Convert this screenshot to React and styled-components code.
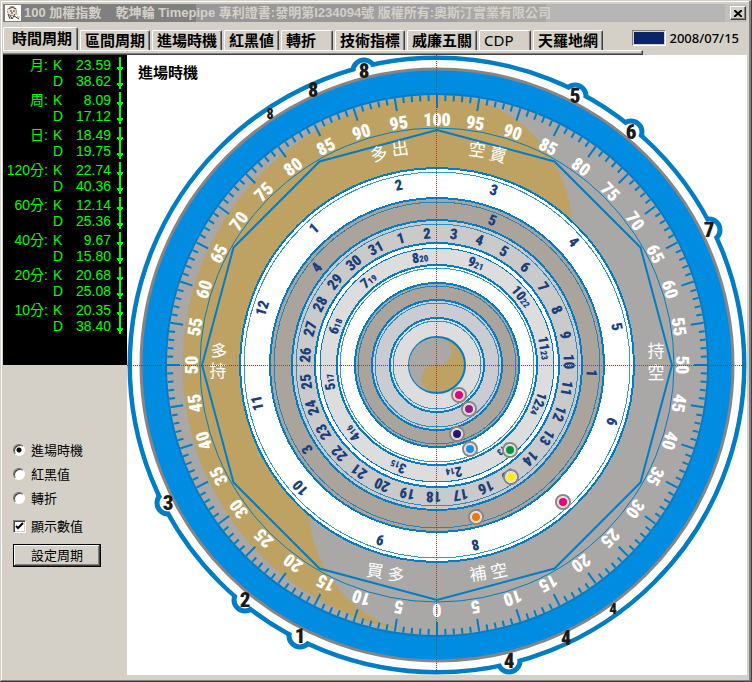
import { useState } from 'react';
import styled, { createGlobalStyle } from 'styled-components';

const latin = '"Noto Sans", "Noto Sans CJK TC", sans-serif';
const narrow = 'Impact, "Roboto Condensed", "Liberation Sans Narrow", "Noto Sans CJK TC", sans-serif';

const GlobalStyle = createGlobalStyle`
  * {
    box-sizing: border-box;
  }

  body {
    margin: 0;
    background: #d4d0c8;
    color: #000000;
    font-family: ${latin};
    font-size: 13px;
  }
`;

const Window = styled.div`
  min-height: 100vh;
  padding: 4px 5px 7px 3px;
  background: #d4d0c8;
  box-shadow: inset -1px -1px #404040, inset 1px 1px #d4d0c8,
    inset -3px -2px #808080, inset 2px 2px #ffffff;
`;

const TitleBar = styled.header`
  display: flex;
  align-items: center;
  gap: 3px;
  height: 18px;
  padding: 0 1px 0 2px;
  background: linear-gradient(
    to right,
    #808080 26%, #989898 26% 49%, #a0a0a4 49% 61%,
    #a8a8a4 61% 73%, #b6b6b6 73% 97%, #c0c0c0 97%
  );
`;

const TitleText = styled.h1`
  flex: 1;
  margin: 0;
  overflow: hidden;
  font: bold 13px/18px "Liberation Sans", "Noto Sans CJK TC", sans-serif;
  white-space: pre;
  color: #d4d0c8;
`;

const CloseButton = styled.button`
  display: flex;
  align-items: center;
  justify-content: center;
  width: 16px;
  height: 14px;
  padding: 0;
  background: #d4d0c8;
  border: 1px solid;
  border-color: #ffffff #404040 #404040 #ffffff;
  box-shadow: inset -1px -1px #808080;
`;

const TopBar = styled.div`
  display: flex;
  justify-content: space-between;
  height: 28px;
`;

const Tabs = styled.nav`
  display: flex;
  align-items: flex-end;
  gap: 2px;
`;

const Tab = styled.button`
  min-width: 52px;
  height: ${({ $active }) => ($active ? '23px' : '20px')};
  padding: ${({ $active }) => ($active ? '0 5px 2px 8px' : '0 4px 1px')};
  background: #d4d0c8;
  border: 1px solid;
  border-color: #ffffff #404040 transparent #ffffff;
  border-bottom: 0;
  border-radius: 2px 2px 0 0;
  box-shadow: inset -1px 0 #808080;
  font: ${({ $plain }) => ($plain ? 'normal' : 'bold')} 15px/18px ${latin};
  text-align: left;
  white-space: nowrap;
`;

const DateBox = styled.div`
  display: flex;
  align-items: center;
  gap: 4px;
  margin-right: 8px;
  padding-top: 3px;
  font-size: 13px;
  font-weight: 500;
  line-height: 18px;
`;

const Swatch = styled.button`
  width: 34px;
  height: 16px;
  padding: 0;
  background: #0a246a;
  border: 1px solid;
  border-color: #808080 #ffffff #ffffff #808080;
  box-shadow: inset 0 0 0 1px #d4d0c8;
`;

const TabEdge = styled.div`
  height: 5px;
  margin-right: 104px;
  border-top: 1px solid #ffffff;
  border-right: 1px solid #404040;
  border-bottom: 1px solid #404040;
  box-shadow: inset -1px -1px #808080;
`;

const Body = styled.div`
  display: grid;
  grid-template-columns: 124px 1fr;
`;

const Sidebar = styled.aside`
  display: flex;
  flex-direction: column;
`;

const Board = styled.div`
  height: 310px;
  padding-top: 2px;
  background: #000000;
`;

const Readings = styled.table`
  width: 100%;
  border-collapse: collapse;
  table-layout: fixed;
  color: #00ff00;
  font: 14px/16px "Liberation Sans", "Noto Sans CJK TC", sans-serif;
  white-space: nowrap;
`;

const Period = styled.th`
  width: 45px;
  height: 16px;
  padding: 0;
  font-weight: 400;
  text-align: right;
`;

const Line = styled.td`
  width: 17px;
  padding: 0 0 0 5px;
`;

const Value = styled.td`
  padding: 0;
  text-align: right;
`;

const Trend = styled.td`
  width: 16px;
  padding: 0 4px 0 0;
  line-height: 0;
  text-align: right;
`;

const GroupGap = styled.tr`
  height: 3px;
`;

const Options = styled.form`
  display: flex;
  flex-direction: column;
  align-items: flex-start;
  gap: 8px;
  padding: 75px 0 0 10px;
`;

const Modes = styled.fieldset`
  display: flex;
  flex-direction: column;
  gap: 4px;
  margin: 0;
  padding: 0;
  border: 0;
`;

const Option = styled.label`
  display: flex;
  align-items: center;
  gap: 5px;
  height: 20px;
  font-size: 13px;
  line-height: 20px;
`;

const Radio = styled.input`
  appearance: none;
  width: 12px;
  height: 12px;
  margin: 0 1px 0 0;
  border: 1px solid;
  border-color: #707070 #ffffff #ffffff #707070;
  border-radius: 50%;
  background: #ffffff;
  box-shadow: inset 1px 1px #404040;

  &:checked {
    background: radial-gradient(circle, #000000 2px, #ffffff 3px);
  }
`;

const CheckMark = styled.span`
  display: grid;
  width: 13px;
  height: 13px;

  & > * {
    grid-area: 1 / 1;
  }

  input:not(:checked) + svg {
    visibility: hidden;
  }
`;

const CheckInput = styled.input`
  appearance: none;
  width: 13px;
  height: 13px;
  margin: 0;
  border: 1px solid;
  border-color: #808080 #ffffff #ffffff #808080;
  background: #ffffff;
  box-shadow: inset 1px 1px #404040, inset -1px -1px #d4d0c8;
`;

const PushButton = styled.button`
  width: 88px;
  height: 23px;
  padding: 0 0 2px;
  background: #d4d0c8;
  border: 1px solid #000000;
  box-shadow: inset -1px -1px #404040, inset 1px 1px #ffffff,
    inset -2px -2px #808080;
  font: 13px/18px ${latin};
`;

const Canvas = styled.main`
  position: relative;
  background: #ffffff;
`;

const CanvasTitle = styled.h2`
  position: absolute;
  top: 7px;
  left: 11px;
  margin: 0;
  font-size: 15px;
  font-weight: 700;
  line-height: 20px;
`;

const Dial = styled.svg`
  display: block;
  width: 100%;
  height: auto;
`;

const DialText = styled.text`
  font-family: ${narrow};
  font-size: ${({ $size }) => $size}px;
  font-weight: ${({ $light }) => ($light ? 400 : 900)};
  fill: ${({ $color }) => $color};
  text-anchor: middle;
`;

const SmallText = styled.tspan`
  font-size: 9px;
`;

const blue = '#007dc5';
const navy = '#17407c';
const tan = '#bda263';
const grey = '#a9a8a6';

const tabs = [
  '時間周期', '區間周期', '進場時機', '紅黑値', '轉折',
  '技術指標', '威廉五關', 'CDP', '天羅地網',
];

const readings = [
  { period: '月', k: '23.59', d: '38.62' },
  { period: '周', k: '8.09', d: '17.12' },
  { period: '日', k: '18.49', d: '19.75' },
  { period: '120分', k: '22.74', d: '40.36' },
  { period: '60分', k: '12.14', d: '25.36' },
  { period: '40分', k: '9.67', d: '15.80' },
  { period: '20分', k: '20.68', d: '25.08' },
  { period: '10分', k: '20.35', d: '38.40' },
];

const modes = ['進場時機', '紅黑值', '轉折'];

// From the outside in: edge radius, fill, and the hairline just inside it
const rings = [
  { r: 197, fill: '#ffffff', hair: 193 },
  { r: 167, fill: '#aaa49d', hair: 163 },
  { r: 145, fill: '#cacaca', hair: 141 },
  { r: 122, fill: '#ffffff', hair: 117 },
  { r: 117, fill: '#dcdddc' },
  { r: 100, fill: '#ffffff', hair: 97 },
  { r: 82, fill: '#aaa49d', hair: 79 },
  { r: 65, fill: '#cbccd1', hair: 62 },
  { r: 47, fill: '#dcdddc', hair: 44 },
];

const bumps = [
  { x: -73, y: -294, label: '8' },
  { x: 138, y: -269, label: '5' },
  { x: 194, y: -233, label: '6' },
  { x: 272, y: -135, label: '7' },
  { x: -269, y: 138, label: '3' },
  { x: -192, y: 235, label: '2' },
  { x: -137, y: 271, label: '1' },
  { x: 72, y: 296, label: '4' },
];

const rimLabels = [
  { x: -124, y: -275, label: '8', size: 20 },
  { x: -167, y: -251, label: '8', size: 14 },
  { x: 129, y: 273, label: '4', size: 20 },
  { x: 176, y: 244, label: '4', size: 15 },
];

const phrases = [
  { x: -58, y: -211, turn: -16, label: '多' },
  { x: -37, y: -216, turn: -8, label: '出' },
  { x: 40, y: -215, turn: 8, label: '空' },
  { x: 61, y: -210, turn: 14, label: '賣' },
  { x: -218, y: -14, turn: 10, label: '多' },
  { x: -219, y: 6, turn: 0, label: '持' },
  { x: 219, y: -14, turn: 0, label: '持' },
  { x: 219, y: 8, turn: 0, label: '空' },
  { x: -62, y: 206, turn: 8, label: '買' },
  { x: -41, y: 210, turn: 14, label: '多' },
  { x: 41, y: 209, turn: -10, label: '補' },
  { x: 62, y: 206, turn: -12, label: '空' },
];

const markers = [
  { x: 22, y: 30, color: '#e6007e' },
  { x: 32, y: 44, color: '#951b81' },
  { x: 20, y: 69, color: '#29166f' },
  { x: 33, y: 84, color: '#1a8fe3' },
  { x: 73, y: 85, color: '#00953a' },
  { x: 74, y: 112, color: '#ffed00' },
  { x: 126, y: 137, color: '#e6007e' },
  { x: 39, y: 152, color: '#ec7612' },
];

const range = (count) => Array.from({ length: count }, (_, i) => i);

const at = (angle, r) => {
  const rad = (angle * Math.PI) / 180;
  return [Math.sin(rad) * r, -Math.cos(rad) * r];
};

const dodecagon = range(12).map((i) => at(i * 30, 235).join(',')).join(' ');

// Text standing on a ring, its top to the outside
const RingText = ({ angle, r, size, color = navy, children }) => (
  <DialText
    $size={size}
    $color={color}
    dy="0.35em"
    transform={`rotate(${angle}) translate(0 ${-r})`}
  >
    {children}
  </DialText>
);

const Rim = () => (
  <g>
    <circle r="307" fill="#ffffff" stroke={blue} strokeWidth="5" />
    {bumps.map(({ x, y, label }) => (
      <circle key={label} cx={x} cy={y} r="11" fill="#ffffff" stroke={blue} strokeWidth="5" />
    ))}
    <circle r="301" fill="none" stroke="#ffffff" strokeWidth="8" />
    <circle r="296" fill="#008ce1" stroke="#858585" strokeWidth="3" />
    {bumps.map(({ x, y, label }) => (
      <DialText key={label} x={x} y={y} dy="0.35em" $size={21} $color="#1a1a1a">{label}</DialText>
    ))}
    {rimLabels.map(({ x, y, label, size }) => (
      <DialText key={x} x={x} y={y} dy="0.35em" $size={size} $color="#1a1a1a">{label}</DialText>
    ))}
  </g>
);

const Scale = () => (
  <g>
    <circle r="271" fill={grey} />
    <path
      d="M0-271 A135 135 0 0 1 0-1 V14 A128 128 0 0 0 0 270 A271 271 0 0 1 0-271Z"
      fill={tan}
    />
    <circle r="271" fill="none" stroke={blue} strokeWidth="2" />
    {range(200).map((i) => (
      <line
        key={i}
        y1="-270"
        y2={i % 5 === 0 ? -257 : -264}
        stroke={blue}
        strokeWidth="2"
        transform={`rotate(${i * 1.8})`}
      />
    ))}
    {range(40).map((i) => (
      <RingText key={i} angle={i * 9} r={245} size={18} color="#ffffff">
        {Math.abs(100 - i * 5)}
      </RingText>
    ))}
    <circle r="237" fill="none" stroke={blue} />
    <polygon points={dodecagon} fill="none" stroke={blue} strokeWidth="2" />
    {phrases.map(({ x, y, turn, label }) => (
      <DialText
        key={`${x} ${y}`}
        $size={17}
        $color="#ffffff"
        $light
        dy="0.35em"
        transform={`translate(${x} ${y}) rotate(${turn})`}
      >
        {label}
      </DialText>
    ))}
  </g>
);

const Calendar = () => (
  <g>
    <g shapeRendering="crispEdges">
      {rings.map(({ r, fill, hair }) => (
        <g key={r} stroke={blue}>
          <circle r={r} fill={fill} strokeWidth={hair ? 2 : 1} />
          {hair && <circle r={hair} fill="none" strokeWidth="1" strokeOpacity="0.8" />}
        </g>
      ))}
    </g>
    {range(12).map((i) => (
      <RingText key={i} angle={i * 30 - 42} r={184} size={15}>{i + 1}</RingText>
    ))}
    {range(5).map((i) => (
      <RingText key={i} angle={i * 72 + 93} r={155} size={15}>{i + 1}</RingText>
    ))}
    {range(31).map((i) => (
      <RingText key={i} angle={(i * 360) / 31 - 16} r={132} size={15}>{i + 1}</RingText>
    ))}
    {range(12).map((i) => (
      <RingText key={i} angle={i * 30 + 141} r={109} size={14}>
        {i + 1}
        <SmallText>{i + 13}</SmallText>
      </RingText>
    ))}
  </g>
);

const Core = () => (
  <g>
    <circle r="28" fill={tan} stroke={blue} strokeWidth="2" />
    <path d="M2-27 A27 27 0 0 0-4 27 A13 13 0 0 1 0 0 A13 13 0 0 0 2-27Z" fill={grey} />
    <g stroke="#d21e1e" strokeDasharray="1 1" shapeRendering="crispEdges">
      <line x1="-0.5" x2="-0.5" y1="-310" y2="310" />
      <line x1="-310" x2="310" y1="0.5" y2="0.5" />
    </g>
    {markers.map(({ x, y, color }) => (
      <g key={`${x} ${y}`} transform={`translate(${x} ${y})`}>
        <circle r="7" fill="#ffffff" stroke="#8b8683" strokeWidth="2" />
        <circle r="5" fill="none" stroke="#cfcbc8" />
        <circle r="4" fill={color} />
      </g>
    ))}
  </g>
);

const DownArrow = () => (
  <svg width="6" height="16" viewBox="0 0 6 16" fill="#00ff00" role="img" aria-label="down">
    <path d="M2 0h2v10h2v2h-1v1h-1v3h-2v-3h-1v-1h-1v-2h2z" />
  </svg>
);

const AppIcon = () => (
  <svg width="16" height="16" viewBox="0 0 16 16" aria-hidden="true">
    <rect width="16" height="16" fill="#ffffff" />
    <circle cx="7" cy="6" r="4.5" fill="#f0e4dc" stroke="#8a7060" strokeDasharray="2 1" />
    <path d="M4 4l3-2 4 2M5 6h2M8 6h2M7 7v2M5 10l2 4 3-5M9 11l5 3M3 9l2 5" fill="none" stroke="#3c3430" />
    <path d="M11 5l1 5M12 12h3" stroke="#c09a80" />
  </svg>
);

const App = () => {
  const [tab, setTab] = useState(tabs[0]);
  const [mode, setMode] = useState(modes[0]);

  return (
    <Window>
      <GlobalStyle />
      <TitleBar>
        <AppIcon />
        <TitleText>
          {'100 加權指數    乾坤輪 Timepipe 專利證書:發明第I234094號 版權所有:奧斯汀實業有限公司'}
        </TitleText>
        <CloseButton type="button" aria-label="Close">
          <svg width="8" height="7" viewBox="0 0 8 7" stroke="#000000" strokeWidth="2">
            <path d="M0 0l8 7M8 0l-8 7" />
          </svg>
        </CloseButton>
      </TitleBar>
      <TopBar>
        <Tabs>
          {tabs.map((name) => (
            <Tab
              key={name}
              type="button"
              $active={name === tab}
              $plain={name === 'CDP'}
              onClick={() => setTab(name)}
            >
              {name}
            </Tab>
          ))}
        </Tabs>
        <DateBox>
          <Swatch type="button" aria-label="Colour" />
          <time dateTime="2008-07-15">2008/07/15</time>
        </DateBox>
      </TopBar>
      <TabEdge />
      <Body>
        <Sidebar>
          <Board>
            <Readings>
              {readings.map(({ period, k, d }) => (
                <tbody key={period}>
                  <tr>
                    <Period scope="rowgroup">{period}:</Period>
                    <Line>K</Line>
                    <Value>{k}</Value>
                    <Trend><DownArrow /></Trend>
                  </tr>
                  <tr>
                    <Period as="td" />
                    <Line>D</Line>
                    <Value>{d}</Value>
                    <Trend><DownArrow /></Trend>
                  </tr>
                  <GroupGap />
                </tbody>
              ))}
            </Readings>
          </Board>
          <Options>
            <Modes>
              {modes.map((name) => (
                <Option key={name}>
                  <Radio
                    type="radio"
                    name="mode"
                    checked={name === mode}
                    onChange={() => setMode(name)}
                  />
                  {name}
                </Option>
              ))}
            </Modes>
            <Option>
              <CheckMark>
                <CheckInput type="checkbox" defaultChecked />
                <svg width="13" height="13" viewBox="0 0 13 13" pointerEvents="none">
                  <path d="M3 6l2 2 5-5" fill="none" stroke="#000000" strokeWidth="2" />
                </svg>
              </CheckMark>
              顯示數值
            </Option>
            <PushButton type="button">設定周期</PushButton>
          </Options>
        </Sidebar>
        <Canvas>
          <Dial viewBox="-310 -310 620 620">
            <Rim />
            <Scale />
            <Calendar />
            <Core />
          </Dial>
          <CanvasTitle>進場時機</CanvasTitle>
        </Canvas>
      </Body>
    </Window>
  );
};

export default App;
